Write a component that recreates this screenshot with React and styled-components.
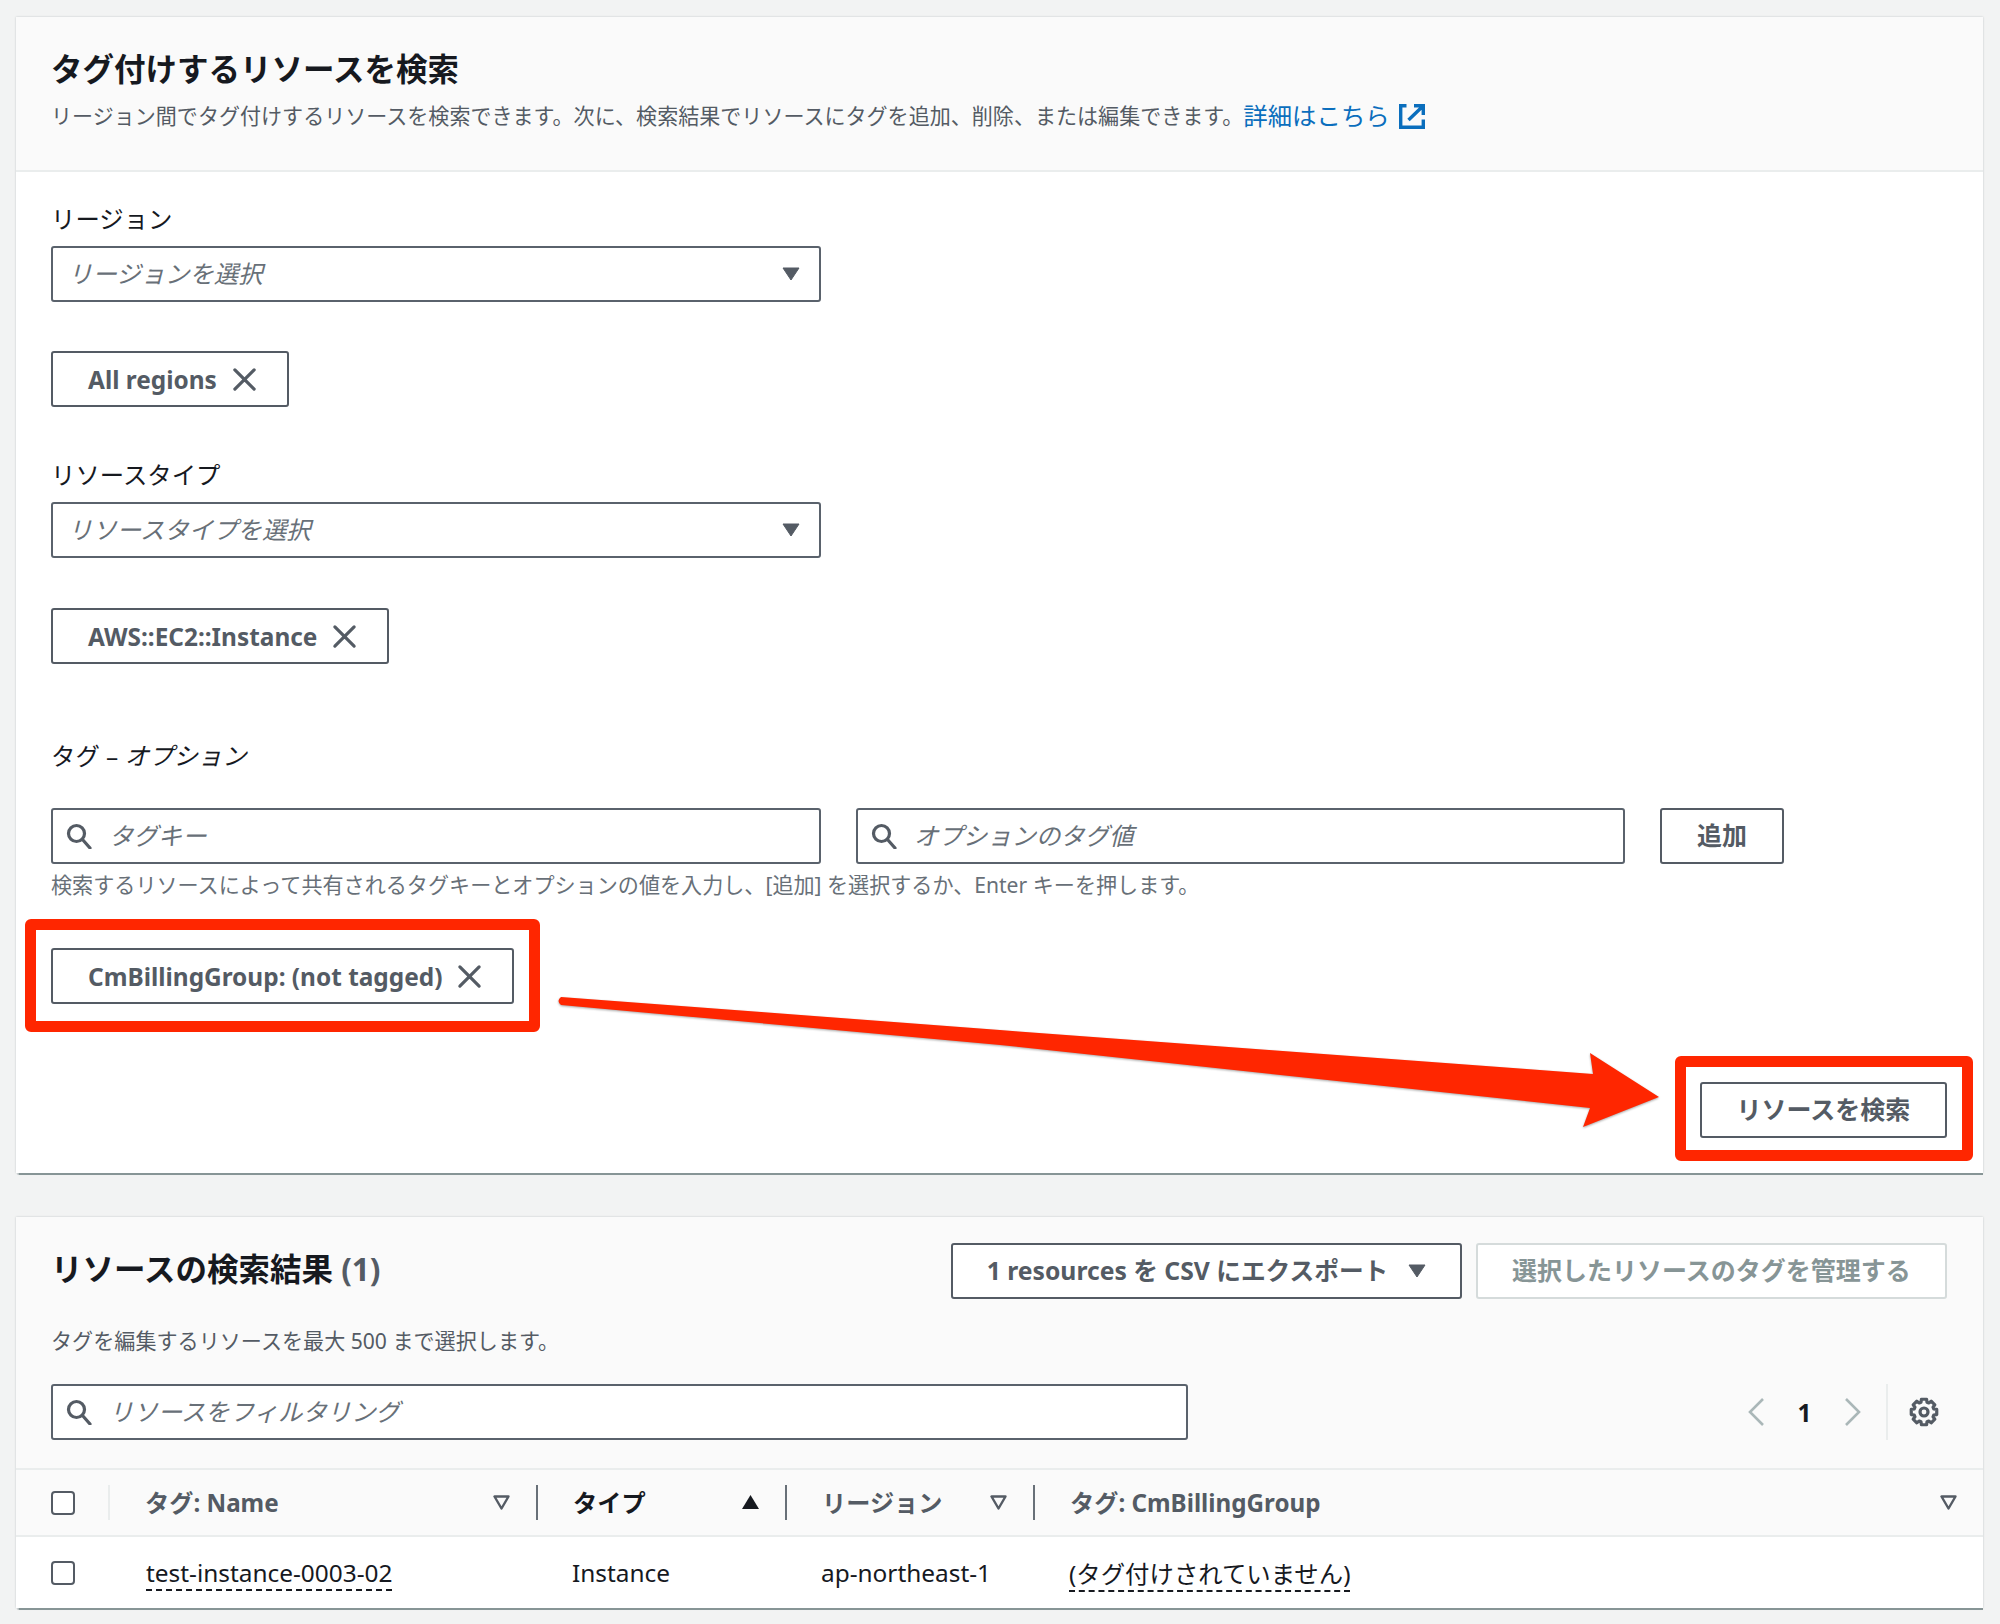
import React from 'react';
import styled, { createGlobalStyle } from 'styled-components';

const Global = createGlobalStyle`
  html, body { margin: 0; padding: 0; background: #f2f3f3; }
  body { font-family: "Noto Sans", "Noto Sans CJK JP", sans-serif; color: #16191f; -webkit-font-smoothing: antialiased; }
  * { box-sizing: border-box; }
`;

const Page = styled.div`
  position: relative;
  width: 2000px;
  height: 1624px;
  padding: 17px 17px 16px 16px;
  display: flex;
  flex-direction: column;
  gap: 44px;
  overflow: hidden;
`;
const Card = styled.section`
  background: #fff;
  box-shadow: 0 2px 1px -0.5px #879596, 0 0 2px rgba(0,28,36,.2);
`;
const Header = styled.header`
  background: #fafafa;
  border-bottom: 2px solid #eaeded;
  padding: 30px 36px 35px 35px;
  height: 155px;
`;
const Title = styled.h2`
  margin: 0;
  font-size: 31.5px;
  line-height: 44px;
  font-weight: 700;
  color: #16191f;
`;
const HeaderDesc = styled.p`
  margin: 7px 0 0;
  font-size: 21.05px;
  line-height: 36px;
  color: #545b64;
  display: flex;
  align-items: center;
  white-space: nowrap;
`;
const Link = styled.a`
  color: #0a6ebd;
  font-size: 24.4px;
  display: inline-flex;
  align-items: center;
  gap: 9px;
`;
const Body = styled.div`
  padding: 30px 36px 35px 35px;
  display: flex;
  flex-direction: column;
  align-items: flex-start;
`;
const Label = styled.div`
  font-size: 24.4px;
  line-height: 34px;
  height: 34px;
  color: #16191f;
  margin-top: ${p => p.$top || 0}px;
  margin-bottom: ${p => p.$bottom || 10}px;
`;
const Field = styled.div`
  width: ${p => p.$w}px;
  height: 56px;
  flex: none;
  background: #fff;
  border: 2px solid #5a626c;
  border-radius: 3px;
  display: flex;
  align-items: center;
  gap: 17px;
  padding: 0 19px 0 ${p => p.$search ? 13 : 15}px;
`;
const Placeholder = styled.span`
  flex: 1;
  font-size: 24.4px;
  font-style: italic;
  color: #687078;
  white-space: nowrap;
  margin-bottom: 4px;
`;
const Token = styled.div`
  position: relative;
  display: inline-flex;
  align-items: center;
  gap: 14px;
  height: 56px;
  margin-top: ${p => p.$top}px;
  padding: 0 29px 0 35px;
  background: #fff;
  border: 2px solid #545b64;
  border-radius: 3px;
  font-size: 24.4px;
  font-weight: 700;
  color: #545b64;
  white-space: nowrap;
`;
const Frame = styled.div`
  position: absolute;
  top: ${p => p.$t}px;
  bottom: ${p => p.$b}px;
  left: ${p => p.$l}px;
  right: ${p => p.$r}px;
  border: 11px solid #ff2600;
  border-radius: 6px;
  pointer-events: none;
`;
const TagRow = styled.div`
  display: flex;
  gap: 35px;
  align-items: flex-start;
`;
const Button = styled.button`
  position: relative;
  height: 56px;
  width: ${p => p.$w}px;
  flex: none;
  background: #fff;
  border: 2px solid ${p => p.$disabled ? '#d5dbdb' : '#545b64'};
  border-radius: 3px;
  font-family: inherit;
  font-size: ${p => p.$fs || 25}px;
  font-weight: 700;
  color: ${p => p.$disabled ? '#879596' : '#545b64'};
  display: inline-flex;
  align-items: center;
  justify-content: center;
  gap: 20px;
  padding: 0 0 5px;
  white-space: nowrap;
  svg { margin-top: 5px; }
`;
const Hint = styled.div`
  font-size: 21.1px;
  line-height: 28px;
  margin-top: 7px;
  color: #687078;
  white-space: nowrap;
`;
const SearchRow = styled.div`
  width: 100%;
  display: flex;
  justify-content: flex-end;
  margin-top: 78px;
`;
const ResultHeader = styled.header`
  background: #fafafa;
  padding: 26px 36px 28px 35px;
`;
const TopRow = styled.div`
  display: flex;
  align-items: center;
  gap: 14px;
`;
const ResultTitle = styled(Title)`
  flex: 1;
  line-height: 52px;
  padding-bottom: 4px;
  span { color: #545b64; }
`;
const ResultDesc = styled.p`
  margin: 28px 0 29px;
  font-size: 21.1px;
  line-height: 28px;
  color: #545b64;
`;
const FilterRow = styled.div`
  display: flex;
  align-items: center;
`;
const Pager = styled.div`
  margin-left: auto;
  display: flex;
  align-items: center;
  height: 56px;
`;
const PageNum = styled.span`
  font-size: 24.4px;
  font-weight: 700;
  color: #16191f;
  width: 79px;
  text-align: center;
`;
const GearCell = styled.div`
  height: 56px;
  margin-left: 24px;
  padding: 0 8px 0 21px;
  border-left: 2px solid #eaeded;
  display: flex;
  align-items: center;
`;
const Row = styled.div`
  display: grid;
  grid-template-columns: 94px 426px 249px 248px 1fr;
  align-items: center;
  height: ${p => p.$h}px;
  background: ${p => p.$head ? '#fafafa' : '#fff'};
  ${p => p.$head ? 'border-top: 2px solid #eaeded; border-bottom: 2px solid #eaeded;' : ''}
`;
const CheckCell = styled.div`
  height: 35px;
  padding-left: 35px;
  display: flex;
  align-items: center;
  border-right: ${p => p.$head ? '2px solid #eaeded' : '0'};
`;
const Check = styled.div`
  width: 24px;
  height: 24px;
  background: #fff;
  border: 2px solid #545b64;
  border-radius: 4px;
`;
const HeadCell = styled.div`
  height: 35px;
  padding: 0 26px 3px 35px;
  display: flex;
  align-items: center;
  justify-content: space-between;
  font-size: 24.2px;
  font-weight: 700;
  color: ${p => p.$active ? '#16191f' : '#545b64'};
  border-left: ${p => p.$div ? '2px solid #687078' : '0'};
  white-space: nowrap;
  svg { margin-top: 2px; }
`;
const DataCell = styled.div`
  padding-left: 36px;
  font-size: 24.4px;
  color: #16191f;
  white-space: nowrap;
`;
const Dashed = styled.span`
  border-bottom: 2px dashed #16191f;
  padding-bottom: 0;
`;
const ArrowLayer = styled.svg`
  position: absolute;
  left: 0;
  top: 0;
  pointer-events: none;
  filter: drop-shadow(0 1.5px 1px rgba(0,0,0,.35));
`;

const SearchIcon = () => (
  <svg width="26" height="26" viewBox="0 0 26 26" fill="none" stroke="#545b64" strokeWidth="3.2">
    <circle cx="10.500" cy="10.500" r="8" />
    <path d="M16.500 16.500 24 25" strokeLinecap="round" />
  </svg>
);
const CloseIcon = () => (
  <svg width="27" height="27" viewBox="0 0 16 16" fill="none" stroke="#545b64" strokeWidth="1.900" strokeLinecap="round">
    <path d="M2.300 2.300l11.400 11.400M13.700 2.300 2.300 13.700" />
  </svg>
);
const Caret = () => (
  <svg width="18" height="14" viewBox="0 0 18 14" fill="#545b64" stroke="#545b64" strokeWidth="1" strokeLinejoin="round">
    <path d="M1 1h16L9 13z" />
  </svg>
);
const ExternalIcon = () => (
  <svg width="26" height="25" viewBox="0 0 26 25" fill="none" stroke="#0a6ebd" strokeWidth="3.4">
    <path d="M7.500 1.700H1.700v21.600h22.600V15.500M15 1.700h9.300V11M23.500 2.500 9.500 16" />
  </svg>
);
const SortOpen = () => (
  <svg width="17" height="15" viewBox="0 0 17 15" fill="none" stroke="#545b64" strokeWidth="2.400" strokeLinejoin="round">
    <path d="M1.500 1.500h14L8.500 13.500z" />
  </svg>
);
const SortUp = () => (
  <svg width="17" height="14" viewBox="0 0 17 14" fill="#16191f">
    <path d="M8.500 0 17 14H0z" />
  </svg>
);
const Chevron = ({ dir }) => (
  <svg width="18" height="28" viewBox="0 0 18 28" fill="none" stroke="#aab7b8" strokeWidth="2.600">
    <path d={dir === 'left' ? 'M16 1 3 14l13 13' : 'M2 1l13 13L2 27'} />
  </svg>
);

const gearPath = () => {
  const teeth = 8;
  const cx = 15;
  const cy = 15;
  const pts = [];
  for (let i = 0; i < teeth; i++) {
    const a = (i / teeth) * Math.PI * 2 - Math.PI / 2;
    const w = 0.2;
    [[a - w * 1.5, 10.2], [a - w, 13], [a + w, 13], [a + w * 1.5, 10.2]].forEach(([t, r]) => {
      pts.push(`${(cx + r * Math.cos(t)).toFixed(2)} ${(cy + r * Math.sin(t)).toFixed(2)}`);
    });
  }
  return `M${pts.join('L')}Z`;
};
const GearIcon = () => (
  <svg width="30" height="30" viewBox="0 0 30 30" fill="none" stroke="#545b64" strokeWidth="3.200" strokeLinejoin="round">
    <path d={gearPath()} />
    <circle cx="15" cy="15" r="4" />
  </svg>
);

export default function App() {
  return (
    <Page>
      <Global />
      <Card>
        <Header>
          <Title>タグ付けするリソースを検索</Title>
          <HeaderDesc>
            リージョン間でタグ付けするリソースを検索できます。次に、検索結果でリソースにタグを追加、削除、または編集できます。
            <Link>詳細はこちら <ExternalIcon /></Link>
          </HeaderDesc>
        </Header>
        <Body>
          <Label>リージョン</Label>
          <Field $w={770}><Placeholder>リージョンを選択</Placeholder><Caret /></Field>
          <Token $top={49}>All regions <CloseIcon /></Token>
          <Label $top={51}>リソースタイプ</Label>
          <Field $w={770}><Placeholder>リソースタイプを選択</Placeholder><Caret /></Field>
          <Token $top={50}>AWS::EC2::Instance <CloseIcon /></Token>
          <Label $top={75} $bottom={35}>タグ – <i>オプション</i></Label>
          <TagRow>
            <Field $w={770} $search><SearchIcon /><Placeholder>タグキー</Placeholder></Field>
            <Field $w={769} $search><SearchIcon /><Placeholder>オプションのタグ値</Placeholder></Field>
            <Button $w={124}>追加</Button>
          </TagRow>
          <Hint>検索するリソースによって共有されるタグキーとオプションの値を入力し、[追加] を選択するか、Enter キーを押します。</Hint>
          <Token $top={49}>
            CmBillingGroup: (not tagged) <CloseIcon />
            <Frame $t={-31} $b={-30} $l={-28} $r={-28} />
          </Token>
          <SearchRow>
            <Button $w={247}>
              リソースを検索
              <Frame $t={-28} $b={-25} $l={-27} $r={-28} />
            </Button>
          </SearchRow>
        </Body>
      </Card>
      <Card>
        <ResultHeader>
          <TopRow>
            <ResultTitle>リソースの検索結果 <span>(1)</span></ResultTitle>
            <Button $w={511} $fs={24.7}>1 resources を CSV にエクスポート <Caret /></Button>
            <Button $w={471} $disabled>選択したリソースのタグを管理する</Button>
          </TopRow>
          <ResultDesc>タグを編集するリソースを最大 500 まで選択します。</ResultDesc>
          <FilterRow>
            <Field $w={1137} $search><SearchIcon /><Placeholder>リソースをフィルタリング</Placeholder></Field>
            <Pager>
              <Chevron dir="left" />
              <PageNum>1</PageNum>
              <Chevron dir="right" />
              <GearCell><GearIcon /></GearCell>
            </Pager>
          </FilterRow>
        </ResultHeader>
        <Row $head $h={69}>
          <CheckCell $head><Check /></CheckCell>
          <HeadCell>タグ: Name <SortOpen /></HeadCell>
          <HeadCell $div $active>タイプ <SortUp /></HeadCell>
          <HeadCell $div>リージョン <SortOpen /></HeadCell>
          <HeadCell $div>タグ: CmBillingGroup <SortOpen /></HeadCell>
        </Row>
        <Row $h={71}>
          <CheckCell><Check /></CheckCell>
          <DataCell><Dashed>test-instance-0003-02</Dashed></DataCell>
          <DataCell>Instance</DataCell>
          <DataCell>ap-northeast-1</DataCell>
          <DataCell><Dashed>(タグ付けされていません)</Dashed></DataCell>
        </Row>
      </Card>
      <ArrowLayer width="2000" height="1624" viewBox="0 0 2000 1624">
        <path
          fill="#ff2600"
          d="M561 997 L1000 1030 L1593 1074 L1590 1053 L1659 1097 L1583 1127 L1590 1108 L1000 1045 L561 1005 Q556 1001 561 997 Z"
        />
      </ArrowLayer>
    </Page>
  );
}
